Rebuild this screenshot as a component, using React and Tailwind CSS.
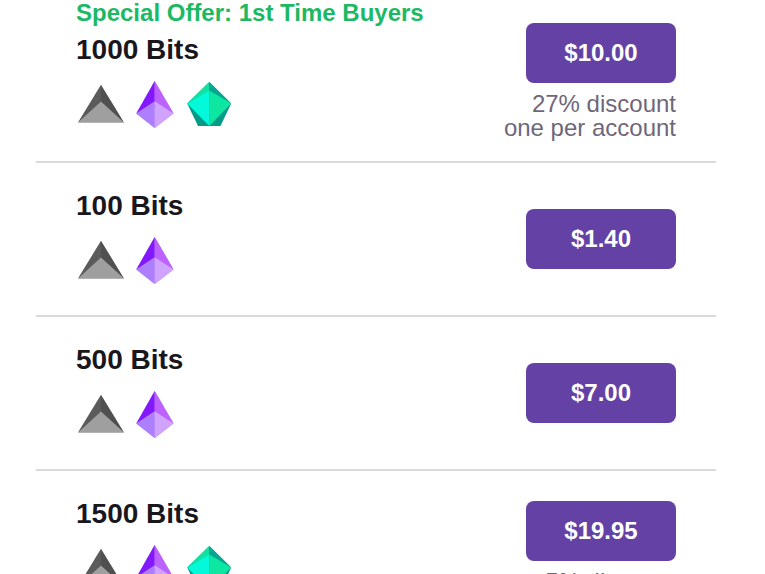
function GrayGem() {
  return (
    <svg viewBox="0 0 50 50" className="size-[50px]" aria-hidden="true">
      <path d="M25 6 2 43.5h46z" fill="#777" />
      <path d="M25 6v17L2.5 43z" fill="#5b5b5b" />
      <path d="M25 6v17L47.500 43z" fill="#505050" />
      <path d="M25 22.500 2.500 43.300h45z" fill="#9f9f9f" />
    </svg>
  );
}

function PurpleGem() {
  return (
    <svg viewBox="0 0 50 50" className="size-[50px]" aria-hidden="true">
      <path d="M24.700 2 6.300 34.500 24.700 49 43.500 34.500z" fill="#b07dff" />
      <path d="M24.700 2v20.500L6.300 34.500z" fill="#8418fd" />
      <path d="M24.700 2v20.500l18.800 12z" fill="#bd62ff" />
      <path d="M24.700 22.300v26.700L6.300 34.500z" fill="#ad7fff" />
      <path d="M24.700 22.300v26.700l18.800-14.500z" fill="#d0a3ff" />
    </svg>
  );
}

function GreenGem() {
  return (
    <svg viewBox="0 0 50 50" className="size-[50px]" aria-hidden="true">
      <path d="M25.300 3 3.200 24.500 14 47h22.500l10.700-22.500z" fill="#089a88" />
      <path d="M25.300 3v9L3.200 24.500z" fill="#0fe3a0" />
      <path d="M25.300 3v9l21.900 12.500z" fill="#05a793" />
      <path d="M25.300 11.500V47L3.200 24.500z" fill="#03f9d9" />
      <path d="M25.300 11.500V47l21.900-22.500z" fill="#0ee7a1" />
    </svg>
  );
}

const gems = { gray: GrayGem, purple: PurpleGem, green: GreenGem };

const offers = [
  {
    bits: 1000,
    price: "$10.00",
    gems: ["gray", "purple", "green"],
    promo: "Special Offer: 1st Time Buyers",
    notes: ["27% discount", "one per account"],
    left: "",
    right: "pt-[23px] pb-[21px]",
  },
  { bits: 100, price: "$1.40", gems: ["gray", "purple"], left: "pt-6 pb-[30px]", right: "pt-[46px]" },
  { bits: 500, price: "$7.00", gems: ["gray", "purple"], left: "pt-6 pb-[30px]", right: "pt-[46px]" },
  {
    bits: 1500,
    price: "$19.95",
    gems: ["gray", "purple", "green"],
    notes: ["5% discount"],
    left: "pt-6 pb-[30px]",
    right: "pt-[30px]",
  },
];

function Offer({ offer }) {
  return (
    <li className="flex items-start justify-between border-b-2 border-[#d9d8de] px-10">
      <div className={offer.left}>
        {offer.promo && (
          <p className="mb-[5px] text-2xl leading-[26px] font-bold text-[#1cb964]">{offer.promo}</p>
        )}
        <h2 className="text-[28px] leading-[38px] font-bold text-[#19171c]">{offer.bits} Bits</h2>
        <div className="mt-2.5 flex gap-1">
          {offer.gems.map((name) => {
            const Gem = gems[name];
            return <Gem key={name} />;
          })}
        </div>
      </div>
      <div className={`flex flex-col items-end ${offer.right}`}>
        <button type="button" className="h-[60px] w-[150px] rounded-lg bg-[#6441a4] text-2xl font-bold text-white">
          {offer.price}
        </button>
        {offer.notes && (
          <p className="mt-[9px] text-right text-2xl leading-6 text-[#6e6779]">
            {offer.notes.map((note) => (
              <span key={note} className="block">{note}</span>
            ))}
          </p>
        )}
      </div>
    </li>
  );
}

export default function App() {
  return (
    <main className="h-screen overflow-hidden bg-white pr-[49px] pl-9 font-['Liberation_Sans',Arial,sans-serif]">
      <ul>
        {offers.map((offer) => (
          <Offer key={offer.bits} offer={offer} />
        ))}
      </ul>
    </main>
  );
}
